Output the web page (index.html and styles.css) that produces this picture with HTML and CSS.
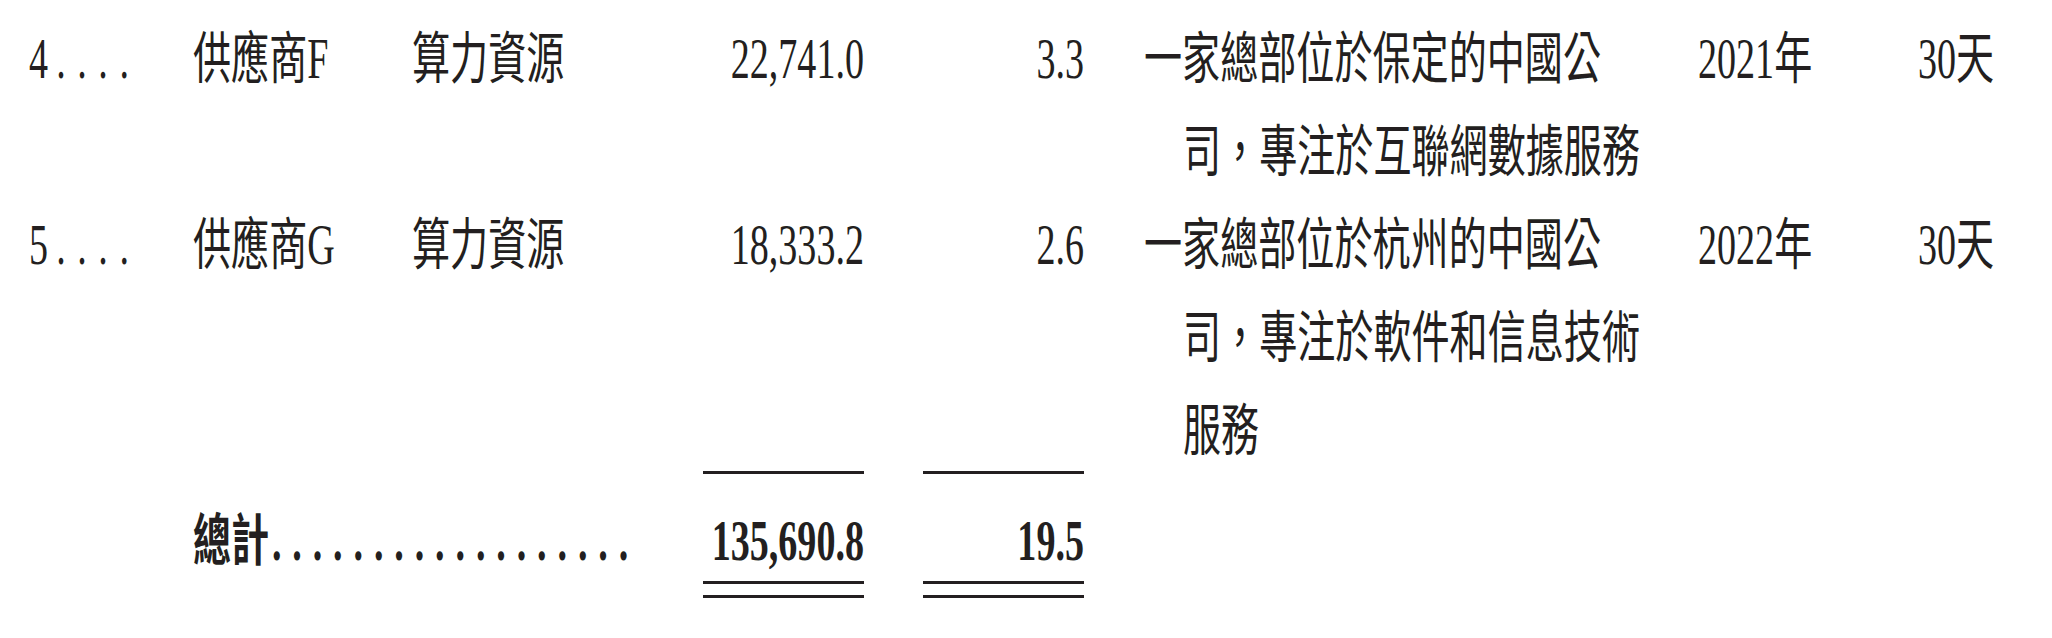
FILE: index.html
```html
<!DOCTYPE html>
<html lang="zh-Hant">
<head>
<meta charset="utf-8">
<title>供應商</title>
<link rel="stylesheet" href="styles.css">
</head>
<body>
<div class="sheet">
  <div class="row">
    <div class="cell"><span class="t">4<span class="lead">....</span></span></div>
    <div class="cell"><span class="t">供應商F</span></div>
    <div class="cell"><span class="t">算力資源</span></div>
    <div class="cell right"><span class="t r">22,741.0</span></div>
    <div class="cell right"><span class="t r">3.3</span></div>
    <div class="cell desc">
      <div class="line"><span class="t">一家總部位於保定的中國公</span></div>
      <div class="line cont"><span class="t">司，專注於互聯網數據服務</span></div>
    </div>
    <div class="cell"><span class="t">2021年</span></div>
    <div class="cell"><span class="t">30天</span></div>
  </div>
  <div class="row">
    <div class="cell"><span class="t">5<span class="lead">....</span></span></div>
    <div class="cell"><span class="t">供應商G</span></div>
    <div class="cell"><span class="t">算力資源</span></div>
    <div class="cell right"><span class="t r">18,333.2</span></div>
    <div class="cell right"><span class="t r">2.6</span></div>
    <div class="cell desc">
      <div class="line"><span class="t">一家總部位於杭州的中國公</span></div>
      <div class="line cont"><span class="t">司，專注於軟件和信息技術</span></div>
      <div class="line cont"><span class="t">服務</span></div>
    </div>
    <div class="cell"><span class="t">2022年</span></div>
    <div class="cell"><span class="t">30天</span></div>
  </div>
  <div class="row total">
    <div class="cell label"><span class="t">總計<span class="lead">..................</span></span></div>
    <div class="cell fig fig-amt">
      <div class="figval"><span class="t r">135,690.8</span></div>
      <div class="dbl"></div>
    </div>
    <div class="cell fig fig-pct">
      <div class="figval"><span class="t r">19.5</span></div>
      <div class="dbl"></div>
    </div>
  </div>
</div>
</body>
</html>
```

FILE: styles.css
```css
html, body {
  margin: 0;
  padding: 0;
  background: #ffffff;
  overflow: hidden;
}

.sheet {
  width: 2052px;
  box-sizing: border-box;
  padding: 13px 0 0 29px;
  font-family: "Liberation Serif", "Noto Sans CJK TC", serif;
  font-size: 56px;
  line-height: 93px;
  color: #231f20;
}

.row {
  display: grid;
  grid-template-columns: 164px 219px 291px 161px 220px 614px 220px 1fr;
  align-items: start;
}

.cell {
  white-space: nowrap;
  min-width: 0;
}

/* the print face is a condensed one: squeeze glyphs horizontally */
.t {
  display: inline-block;
  transform: scaleX(0.68);
  transform-origin: 0 50%;
}

.t.r {
  transform-origin: 100% 50%;
}

.right,
.figval {
  display: flex;
  justify-content: flex-end;
}

.lead {
  margin-left: 12px;
  letter-spacing: 17px;
}

.desc {
  padding-left: 60px;
}

.desc .cont {
  padding-left: 39px;
}

.total {
  margin-top: -7px;
}

.total .label {
  grid-column: 2 / 4;
  padding-top: 39px;
  line-height: 62px;
  font-weight: bold;
}

.total .label .lead {
  margin-left: 4px;
  letter-spacing: 16px;
}

.fig {
  border-top: 3px solid #231f20;
  padding-top: 36px;
  line-height: 62px;
  font-weight: bold;
}

.fig-amt {
  grid-column: 4;
}

.fig-pct {
  grid-column: 5;
  justify-self: end;
  width: 161px;
}

.dbl {
  margin-top: 9px;
  height: 11px;
  border-top: 3px solid #231f20;
  border-bottom: 3px solid #231f20;
}
```
